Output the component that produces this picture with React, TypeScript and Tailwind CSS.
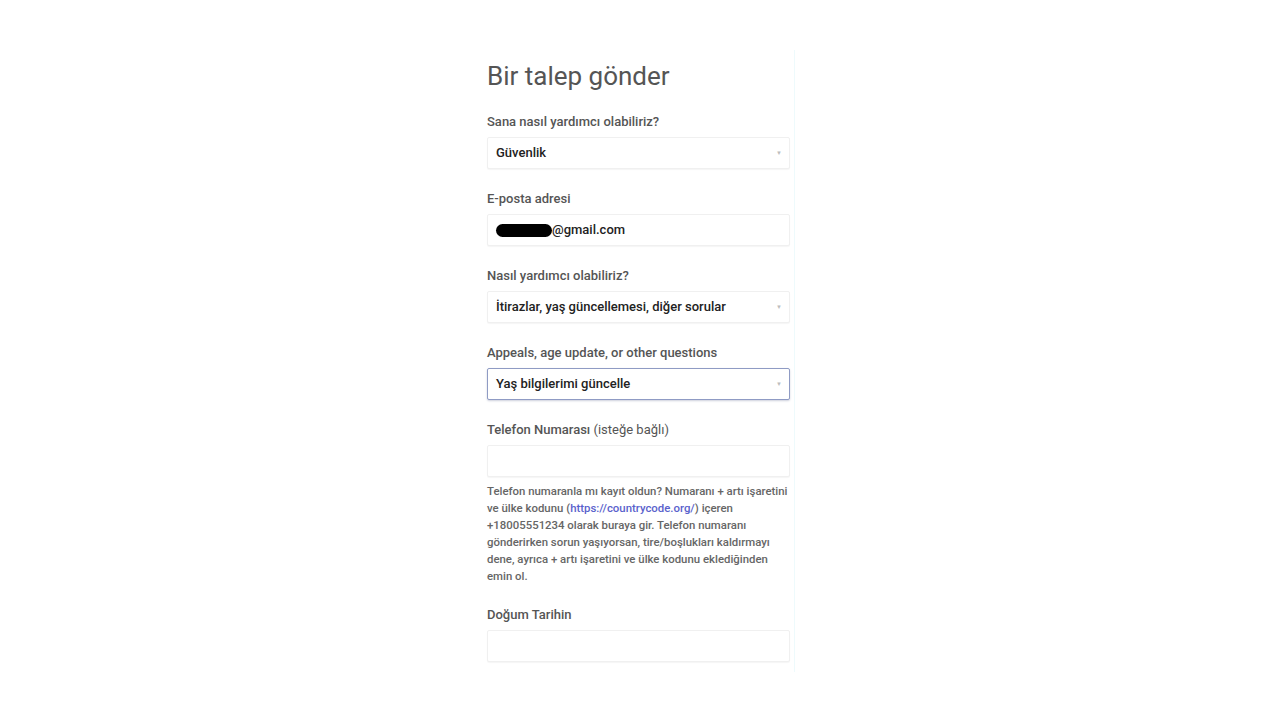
import React from "react";

const Arrow = () => (
  <span className="ml-auto mr-[-1px] text-[6px] leading-none text-[#bdbdbd]">▼</span>
);

function Field({
  label,
  children,
  focused,
  labelExtra,
}: {
  label: string;
  children?: React.ReactNode;
  focused?: boolean;
  labelExtra?: string;
}) {
  return (
    <div className="flex flex-col">
      <div className="h-[18px] text-[13px] leading-[18px] font-medium text-[#555555]">
        {label}
        {labelExtra && <span className="font-normal"> {labelExtra}</span>}
      </div>
      <div
        className={
          "mt-[6px] flex h-[32px] items-center rounded-[2px] bg-white px-[8px] text-[13px] font-medium text-[#222222] " +
          (focused
            ? "border border-[#8f9bc4] shadow-[0_1px_2px_rgba(60,70,120,0.25)]"
            : "border border-[#f0f0f0] shadow-[0_1px_1px_rgba(0,0,0,0.04)]")
        }
      >
        {children}
      </div>
    </div>
  );
}

export default function App() {
  return (
    <div
      className="min-h-[720px] w-full bg-white pt-[50px]"
      style={{ fontFamily: "Roboto, 'Noto Sans', sans-serif" }}
    >
      <div className="ml-[480px] flex w-[315px] border-r border-[#eefafc] pl-[7px] pt-[6px]">
        <div className="flex w-[303px] flex-col">
          <h1 className="h-[40px] text-[26px] leading-[40px] font-normal text-[#555555]">
            Bir talep gönder
          </h1>
          <div className="mt-[17px] flex flex-col gap-[21px]">
            <Field label="Sana nasıl yardımcı olabiliriz?">
              <span>Güvenlik</span>
              <Arrow />
            </Field>
            <Field label="E-posta adresi">
              <span className="inline-block h-[13px] w-[56px] rounded-full bg-black" />
              <span>@gmail.com</span>
            </Field>
            <Field label="Nasıl yardımcı olabiliriz?">
              <span>İtirazlar, yaş güncellemesi, diğer sorular</span>
              <Arrow />
            </Field>
            <Field label="Appeals, age update, or other questions" focused>
              <span>Yaş bilgilerimi güncelle</span>
              <Arrow />
            </Field>
            <div className="flex flex-col">
              <Field label="Telefon Numarası" labelExtra="(isteğe bağlı)" />
              <p className="mt-[6px] text-[11.4px] leading-[17px] font-medium text-[#666666]">
                Telefon numaranla mı kayıt oldun? Numaranı + artı işaretini ve ülke kodunu{" "}
                (<span className="text-[#5a62cc]">https://countrycode.org/</span>) içeren
                +18005551234 olarak buraya gir. Telefon numaranı gönderirken sorun
                yaşıyorsan, tire/boşlukları kaldırmayı dene, ayrıca + artı işaretini ve ülke
                kodunu eklediğinden emin ol.
              </p>
            </div>
            <div className="mt-0">
              <Field label="Doğum Tarihin" />
            </div>
          </div>
          <div className="h-[10px]" />
        </div>
      </div>
    </div>
  );
}
